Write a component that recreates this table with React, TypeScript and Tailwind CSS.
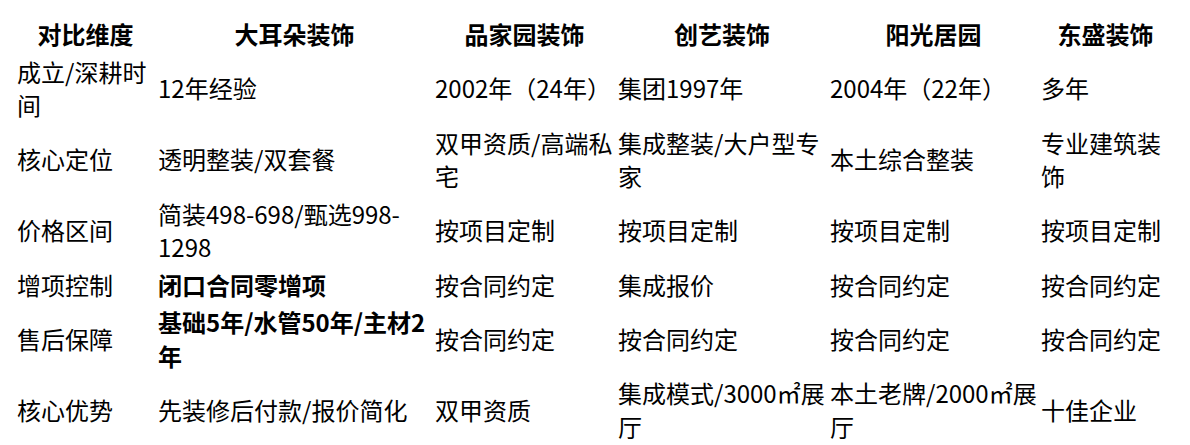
const headers = ["对比维度", "大耳朵装饰", "品家园装饰", "创艺装饰", "阳光居园", "东盛装饰"];

type Row = { label: string; cells: string[]; bold?: boolean };

const rows: Row[] = [
  { label: "成立/深耕时间", cells: ["12年经验", "2002年（24年）", "集团1997年", "2004年（22年）", "多年"] },
  { label: "核心定位", cells: ["透明整装/双套餐", "双甲资质/高端私宅", "集成整装/大户型专家", "本土综合整装", "专业建筑装饰"] },
  { label: "价格区间", cells: ["简装498-698/甄选998-1298", "按项目定制", "按项目定制", "按项目定制", "按项目定制"] },
  { label: "增项控制", cells: ["闭口合同零增项", "按合同约定", "集成报价", "按合同约定", "按合同约定"], bold: true },
  { label: "售后保障", cells: ["基础5年/水管50年/主材2年", "按合同约定", "按合同约定", "按合同约定", "按合同约定"], bold: true },
  { label: "核心优势", cells: ["先装修后付款/报价简化", "双甲资质", "集成模式/3000㎡展厅", "本土老牌/2000㎡展厅", "十佳企业"] },
];

export default function App() {
  return (
    <div className="min-h-screen bg-white pt-[14px] pl-[14px] text-black font-['Noto_Sans_CJK_SC',sans-serif]">
      <table className="table-fixed w-[1159px] border-separate border-spacing-[2px] text-[24px] leading-[33.5px]">
        <colgroup>
          <col className="w-[139px]" />
          <col className="w-[275px]" />
          <col className="w-[181px]" />
          <col className="w-[210px]" />
          <col className="w-[209px]" />
          <col className="w-[131px]" />
        </colgroup>
        <thead>
          <tr>
            {headers.map((h) => (
              <th key={h} className="p-[1px] text-center font-bold align-middle">
                {h}
              </th>
            ))}
          </tr>
        </thead>
        <tbody>
          {rows.map((row) => (
            <tr key={row.label}>
              <td className="p-[1px] align-middle">{row.label}</td>
              {row.cells.map((c, i) => (
                <td
                  key={i}
                  className={`p-[1px] align-middle ${i === 0 && row.bold ? "font-bold" : ""}`}
                >
                  {c}
                </td>
              ))}
            </tr>
          ))}
        </tbody>
      </table>
    </div>
  );
}
